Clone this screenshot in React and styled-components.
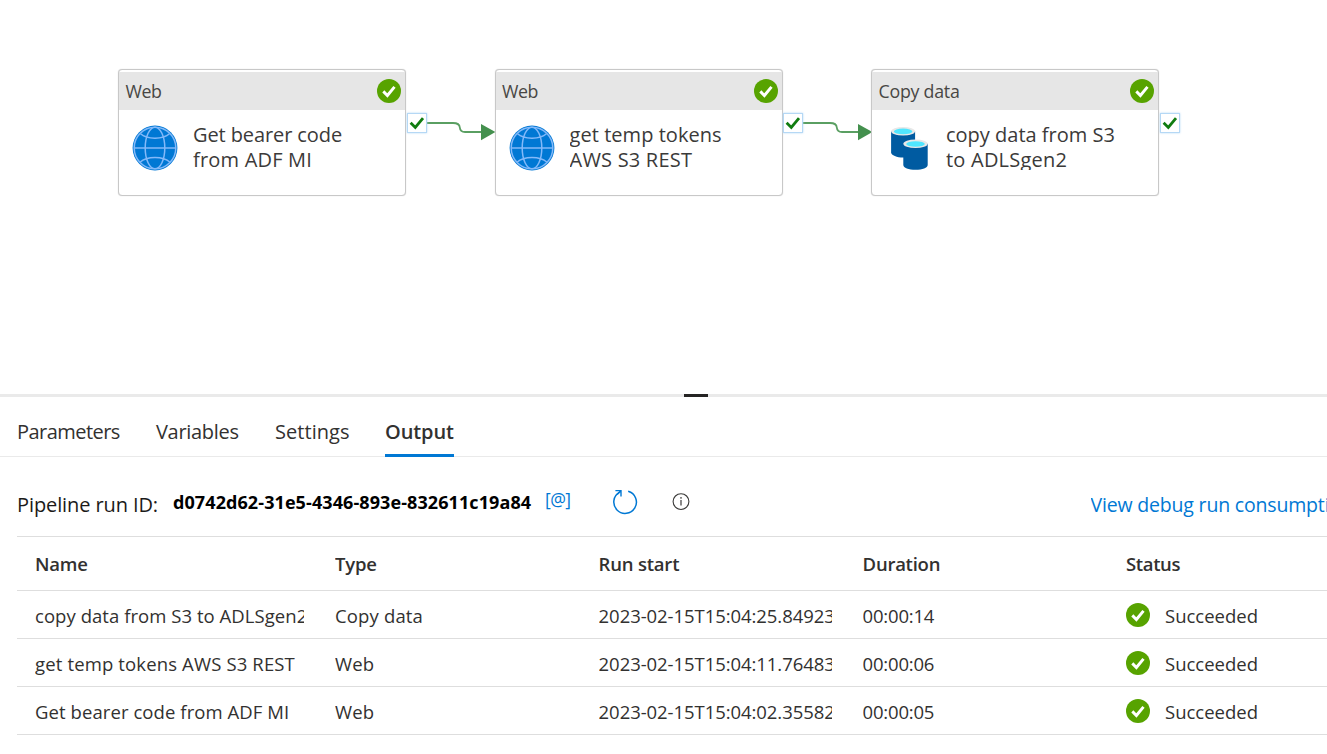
import React from 'react';
import styled, { createGlobalStyle } from 'styled-components';

const GlobalStyle = createGlobalStyle`
  *, *::before, *::after { box-sizing: border-box; }
  body {
    margin: 0;
    background: #fff;
    color: #323130;
    font-family: "Open Sans", "Noto Sans", sans-serif;
    overflow: hidden;
  }
`;

const Page = styled.div`
  display: flex;
  flex-direction: column;
  width: 100%;
  height: 754px;
  overflow: hidden;
`;

/* ---------- Pipeline canvas ---------- */

const Canvas = styled.section`
  position: relative;
  flex: none;
  height: 394px;
`;

const Node = styled.article`
  position: absolute;
  left: ${p => p.$x}px;
  top: 68.5px;
  width: 288px;
  height: 127px;
  padding-top: 2px;
  border: 1px solid #c8c8c8;
  border-radius: 4px;
  background: #fff;
  box-shadow: 0 0 1px #c8c8c8;
`;

const NodeHeader = styled.header`
  display: flex;
  align-items: center;
  justify-content: space-between;
  height: 38px;
  padding: 1px 4px 0 6.5px;
  background: #e6e6e6;
  color: #484644;
`;

const NodeType = styled.span`
  font-size: 17.8px;
  letter-spacing: ${p => p.$spacing}px;
`;

const NodeBody = styled.div`
  display: flex;
  padding: 12px 0 0 13px;
  gap: 15px;
`;

const NodeIcon = styled.svg`
  display: block;
  flex: none;
  margin-top: 3px;
`;

const NodeTitle = styled.div`
  height: 48px;
  overflow: hidden;
  font-size: 20px;
  line-height: 25px;
  color: #3b3a39;
`;

const TitleLine = styled.div`
  white-space: nowrap;
  letter-spacing: ${p => p.$spacing}px;
`;

const Port = styled.div`
  position: absolute;
  left: ${p => p.$x}px;
  top: 113px;
  display: flex;
  align-items: center;
  justify-content: center;
  width: 20px;
  height: 20px;
  border: 1px solid #b5d8f5;
  background: #fff;
  box-shadow: 0 0 2px #b5d8f5;
`;

const Link = styled.svg`
  position: absolute;
  left: ${p => p.$x}px;
  top: 113px;
`;

const Badge = styled.svg`
  display: block;
  flex: none;
`;

/* ---------- Splitter and tabs ---------- */

const Splitter = styled.div`
  display: flex;
  justify-content: center;
  flex: none;
  height: 3px;
  padding-left: 65px;
  background: #eaeaea;
`;

const Grip = styled.div`
  width: 24px;
  height: 3px;
  background: #252423;
`;

const TabBar = styled.nav`
  display: flex;
  flex: none;
  gap: 36px;
  height: 60px;
  padding-left: 17px;
  border-bottom: 1px solid #eaeaea;
`;

const Tab = styled.div`
  width: ${p => p.$width}px;
  height: 60px;
  padding-top: 21px;
  border-bottom: 3px solid ${p => (p.$active ? '#0078d4' : 'transparent')};
  font-size: 20px;
  line-height: 28px;
  font-weight: ${p => (p.$active ? 600 : 400)};
  letter-spacing: ${p => p.$spacing}px;
  white-space: nowrap;
`;

/* ---------- Run information ---------- */

const RunBar = styled.div`
  display: flex;
  align-items: center;
  flex: none;
  height: 79px;
  padding: 10px 0 0 17px;
  white-space: nowrap;
`;

const RunLabel = styled.span`
  width: 156px;
  padding-top: 5px;
  font-size: 20px;
  letter-spacing: -0.1px;
  color: #1b1a19;
`;

const RunId = styled.span`
  width: 372px;
  font-size: 18px;
  font-weight: 700;
  letter-spacing: 0.09px;
  color: #000;
`;

const Expression = styled.span`
  width: 67px;
  padding-bottom: 6px;
  font-size: 17.5px;
  letter-spacing: -0.6px;
  color: #0078d4;
`;

const RunIcon = styled.svg`
  flex: none;
  margin-right: ${p => p.$gap || 0}px;
`;

const ConsumptionLink = styled.a`
  flex: none;
  margin-left: auto;
  width: 236.5px;
  overflow: hidden;
  padding-top: 5px;
  font-size: 19.5px;
  letter-spacing: -0.18px;
  color: #0078d4;
`;

/* ---------- Activity runs table ---------- */

const Table = styled.div`
  display: flex;
  flex-direction: column;
  margin-left: 17px;
  border-top: 1px solid #dedede;
`;

const Row = styled.div`
  display: grid;
  grid-template-columns: 300px 263.6px 264px 263.4px 1fr;
  align-items: center;
  height: ${p => (p.$head ? 54 : 48)}px;
  padding-left: 18px;
  padding-top: ${p => (p.$head ? 1 : 2)}px;
  border-bottom: 1px solid #dedede;
  font-size: 18.5px;
  line-height: 26px;
  font-weight: ${p => (p.$head ? 600 : 400)};
`;

const Cell = styled.div`
  margin-right: 30.6px;
  overflow: hidden;
  white-space: nowrap;
  letter-spacing: ${p => p.$spacing || 0}px;
`;

const StatusCell = styled.div`
  display: flex;
  align-items: center;
  gap: 15px;

  svg { margin-top: -2px; }
`;

function SuccessBadge() {
  return (
    <Badge width="24" height="24" viewBox="0 0 24 24">
      <circle cx="12" cy="12" r="12" fill="#57a300" />
      <path d="M6.3 12.4l4.1 4.1L17.5 7.9" fill="none" stroke="#fff" strokeWidth="2.9" />
    </Badge>
  );
}

function GlobeIcon() {
  return (
    <NodeIcon width="46" height="46" viewBox="0 0 46 46">
      <circle cx="23" cy="23" r="22.4" fill="#0078d4" />
      <g fill="none" stroke="#83b9f9" strokeWidth="1.5">
        <circle cx="23" cy="23" r="20.8" />
        <ellipse cx="23" cy="23" rx="9.8" ry="20.8" />
        <path d="M2 23H44" />
        <path d="M8.5 8.8C15 14.6 31 14.6 37.5 8.8" />
        <path d="M8 37.2C15 30.8 31 30.8 38 37.2" />
      </g>
    </NodeIcon>
  );
}

function CopyDataIcon() {
  return (
    <NodeIcon width="46" height="46" viewBox="0 0 46 46">
      <path d="M6.1 6.2V27.4C6.1 30.3 12 32.4 18.1 32.4S30.1 30.3 30.1 27.4V6.2Z" fill="#005ba1" />
      <ellipse cx="18.1" cy="6.2" rx="12" ry="4.3" fill="#e8e8e8" />
      <ellipse cx="18.1" cy="6.4" rx="9.3" ry="2.8" fill="#50e6ff" />
      <path d="M18.3 18.8V40C18.3 42.8 23.6 44.8 30.5 44.8S42.7 42.8 42.7 40V18.8Z" fill="#005ba1" />
      <ellipse cx="30.5" cy="18.8" rx="12.2" ry="4.3" fill="#e8e8e8" />
      <ellipse cx="30.5" cy="19" rx="9.3" ry="2.8" fill="#50e6ff" />
    </NodeIcon>
  );
}

function SuccessPort({ x }) {
  return (
    <Port $x={x}>
      <svg width="16" height="16" viewBox="0 0 16 16">
        <path d="M1.6 7.8L6.3 12.5L14 3.2" fill="none" stroke="#107c10" strokeWidth="2.8" />
      </svg>
    </Port>
  );
}

function Connector({ x }) {
  return (
    <Link $x={x} width="70" height="30" viewBox="0 0 70 30">
      <path
        d="M0 10H27Q33.5 10 33.8 14.5Q34.2 19 39 19H56"
        fill="none"
        stroke="#5a9f62"
        strokeWidth="1.8"
      />
      <path d="M55 11L69.4 19L55 27.2Z" fill="#44904e" />
    </Link>
  );
}

const nodes = [
  { x: 118, type: 'Web', typeSpacing: -0.5, icon: GlobeIcon, lines: [['Get bearer code', -0.1], ['from ADF MI', 0.2]] },
  { x: 494.6, type: 'Web', typeSpacing: -0.5, icon: GlobeIcon, lines: [['get temp tokens', 0.04], ['AWS S3 REST', 0.2]] },
  { x: 871, type: 'Copy data', typeSpacing: -0.25, icon: CopyDataIcon, lines: [['copy data from S3', 0], ['to ADLSgen2', 0.22]] },
];

const tabs = [
  { label: 'Parameters', width: 103, spacing: -0.55 },
  { label: 'Variables', width: 83, spacing: -0.3 },
  { label: 'Settings', width: 74, spacing: 0.05 },
  { label: 'Output', width: 69, spacing: -0.1, active: true },
];

const runs = [
  { name: 'copy data from S3 to ADLSgen2', spacing: 0.05, type: 'Copy data', start: '2023-02-15T15:04:25.849237Z', duration: '00:00:14' },
  { name: 'get temp tokens AWS S3 REST', spacing: 0.14, type: 'Web', start: '2023-02-15T15:04:11.764833Z', duration: '00:00:06' },
  { name: 'Get bearer code from ADF MI', spacing: 0.08, type: 'Web', start: '2023-02-15T15:04:02.355828Z', duration: '00:00:05' },
];

export default function App() {
  return (
    <Page>
      <GlobalStyle />
      <Canvas>
        <Connector x={426} />
        <Connector x={802.5} />
        {nodes.map(({ x, type, typeSpacing, icon: Icon, lines }) => (
          <Node key={x} $x={x}>
            <NodeHeader>
              <NodeType $spacing={typeSpacing}>{type}</NodeType>
              <SuccessBadge />
            </NodeHeader>
            <NodeBody>
              <Icon />
              <NodeTitle>
                {lines.map(([text, spacing]) => (
                  <TitleLine key={text} $spacing={spacing}>{text}</TitleLine>
                ))}
              </NodeTitle>
            </NodeBody>
          </Node>
        ))}
        <SuccessPort x={406.6} />
        <SuccessPort x={782.8} />
        <SuccessPort x={1159.6} />
      </Canvas>

      <Splitter><Grip /></Splitter>

      <TabBar>
        {tabs.map(t => (
          <Tab key={t.label} $width={t.width} $spacing={t.spacing} $active={t.active}>{t.label}</Tab>
        ))}
      </TabBar>

      <RunBar>
        <RunLabel>Pipeline run ID:</RunLabel>
        <RunId>d0742d62-31e5-4346-893e-832611c19a84</RunId>
        <Expression>[@]</Expression>
        <RunIcon width="26" height="26" viewBox="0 0 26 26" $gap={33.5}>
          <path d="M16.2 2.2A11.3 11.3 0 1 1 7.6 3.2" fill="none" stroke="#0078d4" strokeWidth="1.5" />
          <path d="M3.4 1.6H9V7.4M9 1.6L5.2 5.4" fill="none" stroke="#0078d4" strokeWidth="1.4" />
        </RunIcon>
        <RunIcon width="18" height="18" viewBox="0 0 18 18">
          <circle cx="9" cy="8.6" r="7.9" fill="none" stroke="#3b3a39" strokeWidth="1.1" />
          <path d="M9 7V12.6" stroke="#3b3a39" strokeWidth="1.2" />
          <circle cx="9" cy="4.9" r="0.8" fill="#3b3a39" />
        </RunIcon>
        <ConsumptionLink>View debug run consumption</ConsumptionLink>
      </RunBar>

      <Table>
        <Row $head>
          <Cell $spacing={-0.2}>Name</Cell>
          <Cell $spacing={-0.2}>Type</Cell>
          <Cell $spacing={-0.2}>Run start</Cell>
          <Cell $spacing={-0.25}>Duration</Cell>
          <Cell $spacing={-0.35}>Status</Cell>
        </Row>
        {runs.map(r => (
          <Row key={r.name}>
            <Cell $spacing={r.spacing}>{r.name}</Cell>
            <Cell $spacing={0.15}>{r.type}</Cell>
            <Cell $spacing={-0.06}>{r.start}</Cell>
            <Cell $spacing={-0.2}>{r.duration}</Cell>
            <StatusCell><SuccessBadge />Succeeded</StatusCell>
          </Row>
        ))}
      </Table>
    </Page>
  );
}
